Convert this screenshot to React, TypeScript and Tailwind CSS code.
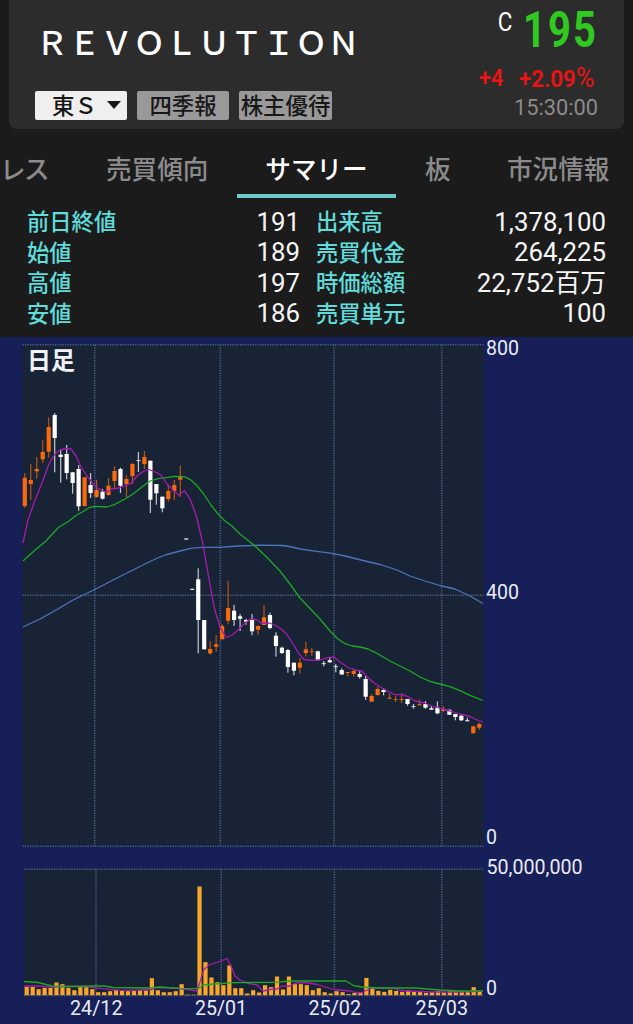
type Candle = [up: 0 | 1, top: number, bottom: number, high: number, low: number];

const CANDLES: Candle[] = [
  [1, 477.7, 506, 473, 507.7], [1, 480, 484, 464, 500], [1, 469, 471.3, 457, 478.7], [1, 452, 459.3, 440, 463],
  [1, 427, 451.7, 417.3, 457.7], [0, 415, 438, 413, 472.3], [0, 454.7, 457, 450, 482.7], [0, 454, 473, 445, 479.3],
  [0, 472.3, 483, 472, 493.7], [0, 469, 506.3, 465, 510.7], [1, 477.3, 506, 477, 506.7], [0, 485, 493, 473, 498],
  [1, 490, 497, 479.7, 497.7], [0, 491.7, 498.7, 489, 499.7], [1, 485.7, 495, 478, 495.7], [1, 471, 481, 466.3, 488],
  [0, 469, 485.7, 467.7, 493], [1, 479, 484, 475.3, 497], [1, 464, 476, 463, 484], [0, 460.3, 461.1, 452, 472],
  [1, 457, 464, 451, 469], [0, 460.7, 499.7, 460.7, 513], [0, 484, 493.3, 484, 504.7], [0, 496.7, 508.3, 496.7, 512.3],
  [1, 491, 499, 485.3, 501.7], [1, 485, 491, 480, 500], [1, 477, 479.7, 465.7, 497], [0, 538.5, 539.5, 538.5, 539.5],
  [0, 588.8, 589.8, 588.8, 589.8], [0, 579.3, 620, 568.3, 653.3], [0, 620, 649.3, 620, 649.3], [1, 649, 653.3, 641, 654.7],
  [1, 644.3, 646.7, 635, 651.7], [1, 626, 639.3, 624, 639.3], [1, 608, 620.7, 580.7, 624], [0, 610.7, 620, 605, 626],
  [0, 616.3, 618.7, 614, 631], [0, 620, 621.7, 618.7, 624.7], [0, 619.3, 631.3, 614, 635.3], [1, 626, 629.7, 625.3, 634.7],
  [1, 617.3, 625, 605, 625], [0, 615, 628, 612.7, 629.3], [0, 635.7, 646, 632.3, 656.7], [0, 647.7, 653, 646.7, 654],
  [0, 650, 667, 649, 672.7], [0, 662.7, 670.7, 662.7, 675.3], [1, 662.7, 667.7, 658, 673.3], [1, 649.3, 653, 642, 656.7],
  [1, 651.3, 652.1, 648, 656], [0, 651.3, 660, 650.7, 661], [0, 663.3, 664.1, 661, 666.3], [0, 660.3, 662.3, 658, 662.7],
  [0, 666.3, 667.1, 664, 672.3], [0, 670, 674.5, 668.3, 674.5], [1, 672, 673, 672, 676.3], [1, 671, 674, 668.3, 676.7],
  [0, 674, 677, 670.7, 678.7], [0, 679, 696.7, 676, 700], [1, 696, 701.7, 694, 701.7], [1, 689, 695, 686.7, 695.7],
  [0, 690, 692, 688, 695.3], [1, 697.7, 698.7, 693.7, 698.7], [1, 699, 699.7, 695.7, 702], [1, 699, 700, 693.3, 703],
  [0, 699, 704, 699, 705.7], [0, 706, 706.7, 704, 708.7], [1, 704.3, 705.4, 699.7, 705.4], [0, 704, 707.7, 701, 708.7],
  [0, 708.3, 709.7, 706, 709.7], [0, 707.3, 713.3, 701.3, 714.3], [1, 708.7, 711, 706.3, 712], [0, 709.7, 714.7, 709.7, 714.7],
  [0, 714, 717, 714, 720.3], [0, 715.7, 720.3, 714.3, 721], [0, 720.3, 721.3, 717.7, 721.3], [1, 726.3, 733.3, 726.3, 733.3],
  [1, 724, 727.7, 722.7, 730],
];

const VOLUMES = [
  8.3, 8.3, 6, 7.3, 7.3, 12.7, 11, 7.3, 5, 8.3, 8.3, 6, 3, 3, 4, 5.3, 4.7, 4, 4.3, 5.3, 4.7, 17, 5, 3, 3, 4, 11, 0.5, 0.5,
  108.7, 33, 17.7, 13, 10, 29.7, 7, 7, 1.7, 5, 2.7, 10, 8, 18.7, 5.7, 18.7, 11, 11, 10, 5, 7, 3, 1.7, 4, 3, 1, 2.3, 3,
  17.3, 7.3, 4.3, 3.3, 5.3, 4.3, 3.3, 5, 3.3, 3.3, 2.3, 3, 4.3, 2.7, 4, 4, 4, 4, 8, 3.3,
];

const MA_SHORT =
  "23,543 28,520 35,500 42,483 49,464 55,454 60,450 66,448.5 71,449 76,456 81,467 87,476 95,486 101,490 107,492 112,489 119,488 130,484 137,476 144,471 149,469.5 155,472 161,475 167,484 174,491 178.5,495 184.5,490.7 190.5,500 196.7,517 202.7,543 208.3,575 214.3,608 220.3,628 226,637.5 232.3,635 238,630 244,624 250,619.3 256,619.3 261,623 269,623 275,625 281,629 287,634.5 293,644 299,654 304,659.5 312,660.3 320,660 328,657.7 334,657 340,662 349,668 355,670 362,671 367,676.7 374,683 382,688 389,692 395,694.7 403,694.7 408,696.7 415,701 424,703 432,706 442,709 450,711 460,714 470,716.5 477,720 483,722";
const MA_MID =
  "23,561 34,551 46,541 52.3,534 59,527 68,521.7 76,515.5 83,511.5 89,507.7 95,506.3 107,507 115,504.3 125,499 133,494 142,487 150,481 158,478.7 168,477.3 174,476.3 184,476.7 190,479.3 196,484.7 203,493 211,505 218,514 225,521 232,526 240,534 255,546 267,557.5 280,571 290,584 300,598 310,608.5 320,619 330,631 338,639 345,643.7 352,646 360,647 368,649 375,652.3 390,661 400,666 410,671 420,677 430,681.3 440,684 450,686.7 460,690.7 470,695.3 483,700.5";
const MA_LONG =
  "23,627 40,619 57,609.5 73,600 94.7,589.5 120,576.5 137,568 150,561.5 160,557 167,554.5 180,551 192,548.2 202,547.3 220,547.3 238,546 258,545.2 283,545.5 292,547 300,549 315,551.2 330,553.2 345,556 365,561 380,564.5 397,570 410,576 425,581 440,585.5 455,589 470,596 483,603.5";
const VOL_SHORT =
  "24,986 37,986 50,987 65,986.5 85,986.5 100,988.3 120,990.3 140,990 152,989.5 154,987.5 170,988 184,989 197,991 200,982 203.5,970 209,965 221,961 227,958.5 231,966 235,976 240,980 248,983.3 257,985 263,991 270,989.5 277,989 282,986 290,986 295,983 306,982.5 317,984.5 334,989.5 350,991 355,992.5 362,992.7 368,989.5 372,988 382,987.7 394,988.3 400,990.5 410,991 430,992 460,992 483,991";
const VOL_MID =
  "24,981.5 38,982.5 52,986 65,986.5 95,986 104,986 113,987.5 150,988 160,987 180,988.3 198,988.7 203,985 215,984 232,982.7 275,982.3 290,981 346,981 353,985.3 361,987 378,988 415,988 440,990 460,991 483,991";

const AXIS_LABELS = [
  { x: 486, y: 354.5, w: 33, t: "800" },
  { x: 486, y: 599, w: 33, t: "400" },
  { x: 486, y: 843.5, w: 11, t: "0" },
  { x: 486.5, y: 873.5, w: 96, t: "50,000,000" },
  { x: 486, y: 994.5, w: 11, t: "0" },
  { x: 70, y: 1014.5, w: 52.5, t: "24/12" },
  { x: 195, y: 1014.5, w: 52, t: "25/01" },
  { x: 308.5, y: 1014.5, w: 52.5, t: "25/02" },
  { x: 415.5, y: 1014.5, w: 52.5, t: "25/03" },
];

function Chart() {
  return (
    <svg className="block h-[687px] w-[633px] shrink-0" viewBox="0 337 633 687">
      <rect x="22.5" y="344.5" width="461" height="501.5" fill="#182436" />
      <rect x="24" y="869" width="459.5" height="126.5" fill="#182436" />
      <g stroke="#4a5d85" strokeWidth="1.6" strokeDasharray="1.3 1.2">
        {[344.8, 595.3, 846.2].map((y) => <line key={y} x1="22.5" x2="483.5" y1={y} y2={y} />)}
        {[869.3, 995.4].map((y) => <line key={y} x1="24" x2="483.5" y1={y} y2={y} />)}
        {[94.7, 220.3, 334, 441.7].map((x) => <line key={x} x1={x} x2={x} y1="345" y2="846" />)}
        {[96, 221.2, 334.4, 441.8].map((x) => <line key={x} x1={x} x2={x} y1="869" y2="995" />)}
      </g>
      {CANDLES.map(([up, top, bottom, high, low], i) => {
        const x = 24.8 + i * 5.98;
        return (
          <g key={i}>
            <rect x={x - 0.6} y={high} width="1.2" height={low - high} fill={up ? "#b95414" : "#c3c8cf"} />
            <rect x={x - 2.1} y={top} width="4.2" height={bottom - top} fill={up ? "#f96a0c" : "#ffffff"} />
          </g>
        );
      })}
      {VOLUMES.map((h, i) => (
        <rect key={i} x={24.6 + i * 5.96} y={995.2 - h} width="4.2" height={h} fill="#f9a72b" />
      ))}
      <g fill="none" strokeWidth="1.3" strokeLinejoin="round">
        <polyline points={MA_LONG} stroke="#4d74bd" />
        <polyline points={MA_MID} stroke="#1ea822" />
        <polyline points={MA_SHORT} stroke="#a51bb0" />
        <polyline points={VOL_SHORT} stroke="#a51bb0" />
        <polyline points={VOL_MID} stroke="#1ea822" />
      </g>
      <text x="27" y="368.5" className="fill-[#f0f2f6] font-['Noto_Sans_CJK_JP',sans-serif] text-[24px] font-bold">日足</text>
      {AXIS_LABELS.map((l, i) => (
        <text key={i} x={l.x} y={l.y} textLength={l.w} lengthAdjust="spacingAndGlyphs" className="fill-[#e8ebf2] font-[Roboto,sans-serif] text-[20px]">
          {l.t}
        </text>
      ))}
    </svg>
  );
}

function Row({ label, value }: { label: string; value: string }) {
  return (
    <div className="flex h-[30.5px] items-center justify-between whitespace-nowrap">
      <span className="pb-[3px] text-[22.3px] font-medium text-[#5fdcdc]">{label}</span>
      <span className="font-[Roboto,'Noto_Sans_CJK_JP',sans-serif] text-[25.8px] text-[#f5f5f5]">{value}</span>
    </div>
  );
}

export default function App() {
  return (
    <div className="flex h-[1024px] w-[633px] flex-col overflow-hidden bg-[#171f58] font-['Noto_Sans_CJK_JP',sans-serif]">
      <div className="h-[337px] shrink-0 bg-[#1b1b1b]">
        <header className="mx-[9px] flex h-[129px] justify-between rounded-b-lg bg-[#2c2c2c] whitespace-nowrap">
          <div className="pl-[26px]">
            <h1 className="mt-[17px] h-[48px] pl-px text-[32px] leading-[48px] font-medium tracking-[0.4px] text-white">ＲＥＶＯＬＵＴＩＯＮ</h1>
            <div className="mt-[26px] flex gap-[10px] text-[22.4px] leading-[27px] font-medium text-[#181818]">
              <button className="flex h-[29px] w-[92px] items-start rounded-[2px] bg-[#efefef] pl-[17px]">
                東Ｓ
                <svg className="mt-[10px] ml-[10px] h-2 w-[14px]" viewBox="0 0 14 8"><path d="M0 0h14L7 8z" fill="#181818" /></svg>
              </button>
              <button className="flex h-[29px] w-[92px] justify-center rounded-[2px] bg-[#999]">四季報</button>
              <button className="flex h-[29px] w-[93px] justify-center rounded-[2px] bg-[#999]">株主優待</button>
            </div>
          </div>
          <div className="flex flex-col items-end pr-[26px] font-[Roboto,sans-serif]">
            <div className="mt-[5px] flex h-[52px] items-start">
              <span className="mt-[4px] mr-[10px] inline-block scale-x-90 text-[25px] leading-[28px] text-white">C</span>
              <span className="inline-block w-[75px] text-[50px] leading-[51px] font-bold text-[#2fc922]">
                <span className="inline-block origin-left scale-x-[0.8] tracking-[2.6px]">195</span>
              </span>
            </div>
            <div className="mt-[7px] flex h-[28px] gap-[15px] text-[24px] leading-[28px] font-semibold text-[#ec1313]">
              <span className="w-[25px]"><span className="inline-block origin-left scale-x-[0.9]">+4</span></span>
              <span className="w-[79px]">
                <span className="inline-block origin-left scale-x-[0.93]">+2.09<span className="text-[27px] font-normal">%</span></span>
              </span>
            </div>
            <div className="mt-[1px] text-[21.8px] leading-[29px] text-[#8b8b8b]">15:30:00</div>
          </div>
        </header>
        <nav className="flex h-[69px] w-[633px] overflow-hidden text-[25.6px] leading-[78px] font-medium whitespace-nowrap text-[#8b8b8b]">
          <span className="w-[106px] tracking-[-1.5px]">レス</span>
          <span className="w-[131px]">売買傾向</span>
          <span className="h-[69px] w-[159px] border-b-4 border-[#6fc9c8] text-center text-white">サマリー</span>
          <span className="w-[111px] pl-[29px]">板</span>
          <span className="shrink-0">市況情報</span>
        </nav>
        <section className="flex justify-between pt-[9px] pr-[27px] pl-[27px]">
          <div className="w-[273px]">
            <Row label="前日終値" value="191" />
            <Row label="始値" value="189" />
            <Row label="高値" value="197" />
            <Row label="安値" value="186" />
          </div>
          <div className="w-[290px]">
            <Row label="出来高" value="1,378,100" />
            <Row label="売買代金" value="264,225" />
            <Row label="時価総額" value="22,752百万" />
            <Row label="売買単元" value="100" />
          </div>
        </section>
      </div>
      <Chart />
    </div>
  );
}
